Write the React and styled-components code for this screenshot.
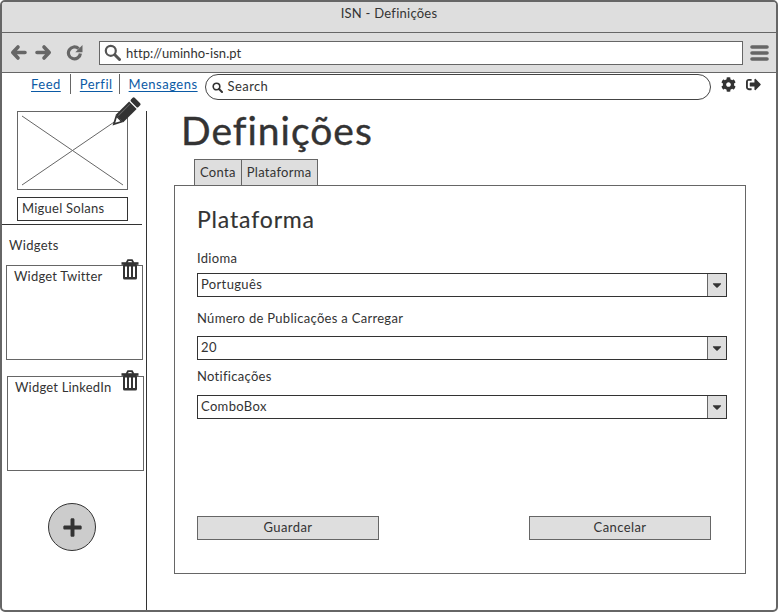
import React from "react";
import styled, { createGlobalStyle } from "styled-components";
import { FaCaretDown, FaCog, FaPlus, FaSignOutAlt } from "react-icons/fa";

const Global = createGlobalStyle`
  html, body {
    margin: 0;
    padding: 0;
    background: #fff;
  }
  * {
    box-sizing: border-box;
  }
`;

const Frame = styled.div`
  width: 778px;
  height: 612px;
  display: flex;
  flex-direction: column;
  border: 2px solid #666;
  border-radius: 5px;
  background: #fff;
  color: #333;
  font-family: "Lato", "Open Sans", sans-serif;
  overflow: hidden;
`;

const TitleBar = styled.div`
  height: 31px;
  flex: none;
  display: flex;
  align-items: center;
  justify-content: center;
  padding-bottom: 8px;
  background: #dedede;
  border-bottom: 1px solid #666;
  font-size: 13px;
  letter-spacing: 0.25px;
`;

const Toolbar = styled.div`
  height: 40px;
  flex: none;
  display: flex;
  align-items: center;
  padding: 0 0 0 8px;
  background: #dedede;
  border-bottom: 1px solid #666;
  color: #666;
`;

const ToolIcon = styled.svg`
  flex: none;
  width: 17px;
  height: 17px;
  margin-right: ${(p) => p.$gap}px;
`;

const Address = styled.div`
  width: 644px;
  height: 24px;
  display: flex;
  align-items: center;
  gap: 5px;
  padding-left: 4px;
  background: #fff;
  border: 1px solid #666;
  color: #333;
  font-size: 13px;
  letter-spacing: 0.05px;
`;

const AddressLens = styled.svg`
  width: 17px;
  height: 17px;
  color: #555;
`;

const Menu = styled.svg`
  width: 19px;
  height: 18px;
  margin-left: 7px;
`;

const NavRow = styled.div`
  height: 38px;
  flex: none;
  display: flex;
  align-items: flex-start;
  padding-left: 20px;
`;

const NavLink = styled.a`
  height: 20px;
  display: flex;
  align-items: flex-start;
  padding: 2px ${(p) => p.$right}px 0 9px;
  border-left: ${(p) => (p.$first ? "none" : "1px solid #666")};
  margin-top: 1px;
  color: #0b5aa5;
  font-size: 13px;
  letter-spacing: 0.5px;
  line-height: 17px;
  text-decoration: underline;
  text-underline-offset: 2px;
`;

const SearchBox = styled.div`
  width: 506px;
  height: 26px;
  margin: 1px 0 0 -2px;
  display: flex;
  align-items: center;
  gap: 5px;
  padding: 0 0 2px 6px;
  border: 1px solid #444;
  border-radius: 13px;
  font-size: 13px;
  letter-spacing: 0.4px;
`;

const SearchLens = styled.svg`
  width: 11px;
  height: 11px;
  margin-top: 2px;
`;

const NavIcon = styled.span`
  display: flex;
  margin: 4px 0 0 ${(p) => p.$left}px;
  font-size: 15px;
`;

const Body = styled.div`
  flex: 1;
  min-height: 0;
  display: grid;
  grid-template-columns: 145px 1fr;
`;

const Sidebar = styled.aside`
  display: flex;
  flex-direction: column;
  border-right: 1px solid #333;
`;

const Avatar = styled.div`
  position: relative;
  width: 111px;
  height: 79px;
  margin-left: 15px;
  border: 1px solid #666;
`;

const Cross = styled.svg`
  display: block;
  width: 100%;
  height: 100%;
`;

const Pencil = styled.svg`
  position: absolute;
  top: -13px;
  right: -12px;
  width: 27px;
  height: 27px;
  overflow: visible;
`;

const NameField = styled.div`
  width: 111px;
  height: 24px;
  margin: 7px 0 0 15px;
  display: flex;
  align-items: center;
  padding: 0 0 2px 4px;
  border: 1px solid #333;
  font-size: 13px;
  letter-spacing: 0.25px;
`;

const Divider = styled.hr`
  width: 140px;
  height: 1px;
  margin: 3px 0 0;
  border: 0;
  background: #333;
`;

const SideLabel = styled.div`
  margin: 12px 0 0 7px;
  font-size: 13px;
  letter-spacing: 0.3px;
  line-height: 17px;
`;

const Widget = styled.div`
  position: relative;
  width: 137px;
  height: 95px;
  margin: ${(p) => p.$top}px 0 0 ${(p) => p.$left}px;
  padding: 2px 0 0 7px;
  border: 1px solid #666;
  font-size: 13px;
  letter-spacing: 0.2px;
  line-height: 17px;
`;

const TrashIcon = styled.svg`
  position: absolute;
  top: -7px;
  right: ${(p) => p.$right}px;
  width: 18px;
  height: 21px;
`;

const AddButton = styled.div`
  width: 48px;
  height: 48px;
  margin: 32px 0 0 46px;
  display: flex;
  align-items: center;
  justify-content: center;
  border: 1px solid #333;
  border-radius: 50%;
  background: #ccc;
  color: #333;
  font-size: 21px;
`;

const Main = styled.main`
  display: flex;
  flex-direction: column;
  padding: 0 0 36px 27px;
`;

const Title = styled.h1`
  margin: 0 0 0 7px;
  height: 48px;
  font-size: 39px;
  font-weight: 400;
  line-height: 38px;
  letter-spacing: 1px;
  -webkit-text-stroke: 0.4px #333;
`;

const Tabs = styled.div`
  display: flex;
  margin-left: 20px;
`;

const Tab = styled.div`
  height: 27px;
  display: flex;
  align-items: center;
  padding: 0 ${(p) => p.$pad}px 2px;
  margin-left: ${(p) => (p.$first ? 0 : -1)}px;
  margin-bottom: -1px;
  background: #dedede;
  border: 1px solid #666;
  font-size: 13px;
  letter-spacing: 0.3px;
`;

const Panel = styled.section`
  width: 572px;
  flex: 1;
  display: flex;
  flex-direction: column;
  padding: 19px 18px 33px 22px;
  border: 1px solid #666;
`;

const Heading = styled.h2`
  margin: 0;
  font-size: 23px;
  font-weight: 400;
  line-height: 29px;
  letter-spacing: 0.85px;
  -webkit-text-stroke: 0.15px #333;
`;

const Field = styled.div`
  display: flex;
  flex-direction: column;
  margin-top: ${(p) => p.$top}px;
`;

const Label = styled.label`
  height: ${(p) => p.$h}px;
  font-size: 13px;
  letter-spacing: 0.3px;
  line-height: 17px;
`;

const Select = styled.div`
  height: 24px;
  display: flex;
  align-items: center;
  justify-content: space-between;
  padding-left: 3px;
  border: 1px solid #333;
  font-size: 13px;
  letter-spacing: 0.35px;
`;

const SelectValue = styled.span`
  margin-top: -2px;
`;

const Caret = styled.span`
  width: 19px;
  height: 100%;
  display: flex;
  align-items: center;
  justify-content: center;
  background: #dedede;
  border-left: 1px solid #666;
  font-size: 14px;
`;

const Actions = styled.div`
  margin-top: auto;
  display: flex;
  justify-content: space-between;
  padding-right: 16px;
`;

const Button = styled.button`
  width: 182px;
  height: 24px;
  padding: 0 0 2px;
  background: #dedede;
  border: 1px solid #666;
  color: #333;
  font-family: inherit;
  font-size: 13px;
  letter-spacing: 0.4px;
`;

const Trash = ({ right }) => (
  <TrashIcon viewBox="0 0 18 21" $right={right}>
    <path d="M5.5 4 7 1.2h4L12.5 4" fill="none" stroke="#333" strokeWidth="1.8" />
    <rect x="0.5" y="3.2" width="17" height="2.6" fill="#333" />
    <rect x="2" y="5" width="14" height="15.5" rx="1.5" fill="#333" />
    <path d="M5 7.5v10.5M9 7.5v10.5M13 7.5v10.5" stroke="#fff" strokeWidth="2" />
  </TrashIcon>
);

const selects = [
  { label: "Idioma", value: "Português", top: 16, h: 23 },
  { label: "Número de Publicações a Carregar", value: "20", top: 13, h: 26 },
  { label: "Notificações", value: "ComboBox", top: 8, h: 27 },
];

const App = () => (
  <Frame>
    <Global />
    <TitleBar>ISN - Definições</TitleBar>
    <Toolbar>
      <ToolIcon viewBox="0 0 17 17" $gap={8}>
        <path
          d="M8 3 2.8 8.5 8 14M3.5 8.5h11.5"
          fill="none"
          stroke="currentColor"
          strokeWidth="3.6"
          strokeLinecap="round"
          strokeLinejoin="round"
        />
      </ToolIcon>
      <ToolIcon viewBox="0 0 17 17" $gap={14}>
        <path
          d="M9 3 14.2 8.5 9 14M13.5 8.5H2"
          fill="none"
          stroke="currentColor"
          strokeWidth="3.6"
          strokeLinecap="round"
          strokeLinejoin="round"
        />
      </ToolIcon>
      <ToolIcon viewBox="0 0 17 17" $gap={16}>
        <path
          d="M12.6 4.6A6 6 0 1 0 14.4 9.5"
          fill="none"
          stroke="currentColor"
          strokeWidth="3.2"
        />
        <path d="M16.5 1v7.2H9.3z" fill="currentColor" />
      </ToolIcon>
      <Address>
        <AddressLens viewBox="0 0 17 17">
          <circle cx="6.8" cy="6.8" r="5" fill="none" stroke="currentColor" strokeWidth="2.2" />
          <path d="M10.8 10.8 15.5 15.5" stroke="currentColor" strokeWidth="3" strokeLinecap="round" />
        </AddressLens>
        http://uminho-isn.pt
      </Address>
      <Menu viewBox="0 0 19 18">
        <path
          d="M2 3h15M2 9h15M2 15h15"
          stroke="currentColor"
          strokeWidth="3.6"
          strokeLinecap="round"
        />
      </Menu>
    </Toolbar>
    <NavRow>
      <NavLink $first $right={9}>
        Feed
      </NavLink>
      <NavLink $right={6}>Perfil</NavLink>
      <NavLink $right={9}>Mensagens</NavLink>
      <SearchBox>
        <SearchLens viewBox="0 0 11 11">
          <circle cx="4.5" cy="4.5" r="3.3" fill="none" stroke="#333" strokeWidth="1.6" />
          <path d="M7 7 10 10" stroke="#333" strokeWidth="2" strokeLinecap="round" />
        </SearchLens>
        Search
      </SearchBox>
      <NavIcon $left={10}>
        <FaCog />
      </NavIcon>
      <NavIcon $left={10}>
        <FaSignOutAlt />
      </NavIcon>
    </NavRow>
    <Body>
      <Sidebar>
        <Avatar>
          <Cross viewBox="0 0 109 77" preserveAspectRatio="none">
            <path d="M4 4 105 73M4 73 105 4" stroke="#666" fill="none" />
          </Cross>
          <Pencil viewBox="0 0 28 28">
            <g transform="rotate(45 14 14)">
              <rect x="8.5" y="-3.5" width="11" height="5.5" rx="1.5" fill="#333" />
              <rect x="8.5" y="3.2" width="11" height="19.5" fill="#333" />
              <path d="M8.5 22.5h11L14 33z" fill="#333" />
              <path d="M11.3 24h5.4L14 29z" fill="#fff" />
              <path d="M11 4.5v17" stroke="#666" strokeWidth="1" />
            </g>
          </Pencil>
        </Avatar>
        <NameField>Miguel Solans</NameField>
        <Divider />
        <SideLabel>Widgets</SideLabel>
        <Widget $top={11} $left={4}>
          Widget Twitter
          <Trash right={3} />
        </Widget>
        <Widget $top={16} $left={5}>
          Widget LinkedIn
          <Trash right={4} />
        </Widget>
        <AddButton>
          <FaPlus />
        </AddButton>
      </Sidebar>
      <Main>
        <Title>Definições</Title>
        <Tabs>
          <Tab $first $pad={5}>
            Conta
          </Tab>
          <Tab $pad={5}>Plataforma</Tab>
        </Tabs>
        <Panel>
          <Heading>Plataforma</Heading>
          {selects.map((s) => (
            <Field key={s.label} $top={s.top}>
              <Label $h={s.h}>{s.label}</Label>
              <Select>
                <SelectValue>{s.value}</SelectValue>
                <Caret>
                  <FaCaretDown />
                </Caret>
              </Select>
            </Field>
          ))}
          <Actions>
            <Button>Guardar</Button>
            <Button>Cancelar</Button>
          </Actions>
        </Panel>
      </Main>
    </Body>
  </Frame>
);

export default App;
